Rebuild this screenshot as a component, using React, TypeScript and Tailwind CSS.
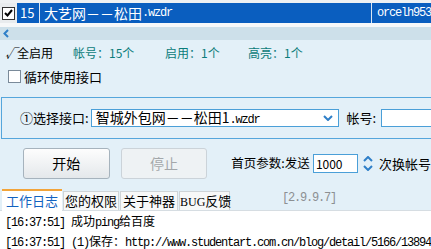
import { useState } from "react";

const cjk = "font-['Noto_Sans_CJK_SC',sans-serif]";
const mono = "font-['Liberation_Mono','Noto_Sans_CJK_SC',monospace] text-[12px] tracking-[-1.2px]";

function Chevron({ up = false }: { up?: boolean }) {
  return (
    <svg width="10" height="6" viewBox="0 0 10 6">
      <path
        d={up ? "M1 5 L5 1 L9 5" : "M1 1 L5 5 L9 1"}
        fill="none"
        stroke="#2f7fc8"
        strokeWidth="2"
      />
    </svg>
  );
}

export default function App() {
  const [loop, setLoop] = useState(false);
  const [tab, setTab] = useState(0);
  const tabs = ["工作日志", "您的权限", "关于神器", "BUG反馈"];
  const tabW = ["w-[60px]", "w-[56px]", "w-[58px]", "w-[51px]"];

  return (
    <div className={`w-[431px] h-[249px] overflow-hidden bg-[#e3f0f8] ${cjk} text-black`}>
      {/* list row (selected) */}
      <div className="h-[3px] bg-[#eef1f3]" />
      <div className="flex h-[20px] items-center">
        <div className="flex h-full w-[17px] items-center justify-center bg-[#e9ecee]">
          <div className="flex h-[13px] w-[13px] items-center justify-center border border-[#333] bg-white">
            <svg width="9" height="8" viewBox="0 0 9 8">
              <path d="M1 4 L3.5 6.5 L8 1" fill="none" stroke="#000" strokeWidth="2" />
            </svg>
          </div>
        </div>
        <div className="flex h-full w-[22px] items-center bg-[#0a5ebf] pl-[3px] text-[13px] text-white">15</div>
        <div className="h-full w-px bg-[#dbe6f2]" />
        <div className="flex h-full w-[332px] items-center bg-[#0a5ebf] pl-[4px] text-[14px] text-white">
          大艺网－－松田<span className={mono}>.wzdr</span>
        </div>
        <div className="h-full w-px bg-[#dbe6f2]" />
        <div className={`flex h-full flex-1 items-center bg-[#0a5ebf] pl-[5px] ${mono} text-white`}>
          orcelh953
        </div>
      </div>
      <div className="h-[4px] bg-[#f6f8f9]" />
      <div className="flex h-[13px] items-center bg-[#cde0ea] pl-[3px]">
        <svg width="6" height="9" viewBox="0 0 6 9">
          <path d="M5 1 L1.5 4.5 L5 8" fill="none" stroke="#2f7fc8" strokeWidth="2" />
        </svg>
      </div>

      {/* counts */}
      <div className="flex h-[26px] items-center text-[12px]">
        <span className="w-[73px] pl-[5px]">
          <span className="italic">√</span>全启用
        </span>
        <span className="w-[92px] text-[#0b7c7a]">帐号：15个</span>
        <span className="w-[83px] text-[#0b7c7a]">启用：1个</span>
        <span className="text-[#0b7c7a]">高亮：1个</span>
      </div>

      {/* loop checkbox */}
      <label className="mt-[4px] flex h-[13px] items-center pl-[8px] text-[13px]">
        <input
          type="checkbox"
          checked={loop}
          onChange={() => setLoop(!loop)}
          className="h-[13px] w-[13px] appearance-none border border-[#7a8a99] bg-white"
        />
        <span className="ml-[3px]">循环使用接口</span>
      </label>

      {/* interface box */}
      <div className="ml-[1px] mt-[14px] flex h-[42px] w-[440px] items-center border border-[#55a6dc] pl-[18px] text-[13px]">
        <span className="w-[72px]">①选择接口:</span>
        <div className="flex h-[18px] w-[252px] items-center justify-between border border-[#4a9fd8] bg-white pl-[4px] pr-[5px]">
          <span className="text-[14px] leading-none">
            智城外包网－－松田1<span className={mono}>.wzdr</span>
          </span>
          <Chevron />
        </div>
        <span className="ml-[8px] w-[35px]">帐号:</span>
        <div className="h-[18px] w-[60px] border border-[#4a9fd8] bg-white" />
      </div>

      {/* buttons */}
      <div className="mt-[9px] flex h-[31px] items-center text-[14px]">
        <button className="ml-[23px] h-[31px] w-[88px] rounded-[3px] border border-[#a6b3bd] bg-gradient-to-b from-[#fdfdfd] to-[#e4e8eb]">
          开始
        </button>
        <button className="ml-[11px] h-[31px] w-[88px] rounded-[3px] border border-[#cbd3d9] bg-[#eef2f4] text-[#a3a7aa]">
          停止
        </button>
        <span className="ml-[24px] w-[83px] whitespace-nowrap text-[12.5px]">首页参数:发送</span>
        <div className="flex h-[19px] w-[46px] items-center border border-[#4a9fd8] bg-white pl-[2px] text-[12px]">
          1000
        </div>
        <div className="ml-[4px] flex w-[12px] flex-col items-center gap-[3px]">
          <Chevron up />
          <Chevron />
        </div>
        <span className="ml-[5px] whitespace-nowrap text-[13px]">次换帐号</span>
      </div>

      {/* tabs */}
      <div className="mt-[10px] flex h-[22px] items-end border-b border-[#d6dde2] pl-[2px]">
        {tabs.map((t, i) =>
          i === tab ? (
            <button
              key={t}
              onClick={() => setTab(i)}
              className={`${tabW[i]} -mb-px h-[22px] whitespace-nowrap border-t-2 border-[#f2a43a] bg-white text-[13px] leading-[20px] text-[#1262bf]`}
            >
              {t}
            </button>
          ) : (
            <button
              key={t}
              onClick={() => setTab(i)}
              className={`${tabW[i]} ml-[1px] h-[19px] whitespace-nowrap border border-b-0 border-[#cfd4d7] bg-[#f7f8f8] text-[13px] leading-[18px]`}
            >
              {t === "BUG反馈" ? (
                <>
                  <span className="font-['Liberation_Serif',serif] text-[12px]">BUG</span>反馈
                </>
              ) : (
                t
              )}
            </button>
          )
        )}
        <span className={`mb-[3px] ml-[52px] ${mono} text-[#8c8f92]`}>[2.9.9.7]</span>
      </div>

      {/* log */}
      <div className="h-[40px] bg-white pl-[5px] pt-[1px] text-[12px] leading-[18px]">
        <div className="whitespace-nowrap">
          <span className={mono}>[16:37:51] </span>成功<span className={mono}>ping</span>给百度
        </div>
        <div className="whitespace-nowrap">
          <span className={mono}>[16:37:51] (1)</span>保存：<span className={mono}>http://www.studentart.com.cn/blog/detail/5166/13894</span>
        </div>
        <div className="whitespace-nowrap">
          <span className={mono}>[16:37:51] </span>发布成功
        </div>
      </div>
    </div>
  );
}
